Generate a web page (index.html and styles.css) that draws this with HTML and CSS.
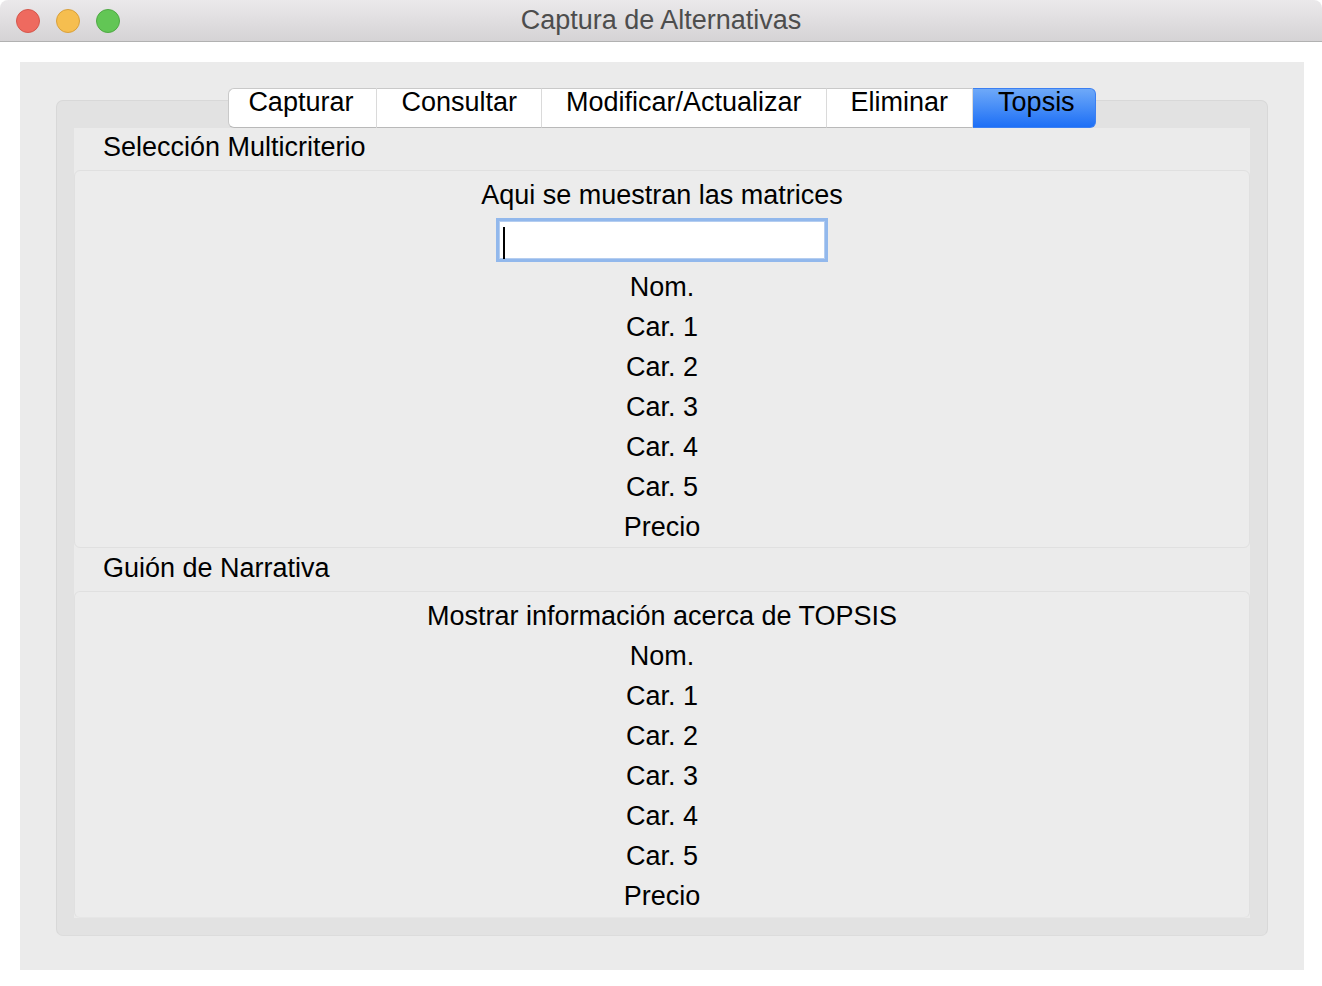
FILE: index.html
```html
<!DOCTYPE html>
<html lang="es">
<head>
<meta charset="utf-8">
<title>Captura de Alternativas</title>
<link rel="stylesheet" href="styles.css">
</head>
<body>
<div class="window">
  <div class="titlebar">
    <div class="lights">
      <span class="light red"></span>
      <span class="light yellow"></span>
      <span class="light green"></span>
    </div>
    <div class="title">Captura de Alternativas</div>
  </div>
  <div class="body">
    <div class="panel">
      <div class="tabpane">
        <div class="tabs">
          <div class="tab first">Capturar</div>
          <div class="tab">Consultar</div>
          <div class="tab">Modificar/Actualizar</div>
          <div class="tab">Eliminar</div>
          <div class="tab active">Topsis</div>
        </div>
        <div class="content">
          <div class="sec-head">Selección Multicriterio</div>
          <div class="sec-box">
            <div class="row">Aqui se muestran las matrices</div>
            <div class="input"><span class="caret"></span></div>
            <div class="row gap">Nom.</div>
            <div class="row">Car. 1</div>
            <div class="row">Car. 2</div>
            <div class="row">Car. 3</div>
            <div class="row">Car. 4</div>
            <div class="row">Car. 5</div>
            <div class="row">Precio</div>
          </div>
          <div class="sec-head second">Guión de Narrativa</div>
          <div class="sec-box last">
            <div class="row">Mostrar información acerca de TOPSIS</div>
            <div class="row">Nom.</div>
            <div class="row">Car. 1</div>
            <div class="row">Car. 2</div>
            <div class="row">Car. 3</div>
            <div class="row">Car. 4</div>
            <div class="row">Car. 5</div>
            <div class="row">Precio</div>
          </div>
        </div>
      </div>
    </div>
  </div>
</div>
</body>
</html>
```
FILE: styles.css
```css
html, body {
  margin: 0;
  padding: 0;
  background: #ffffff;
}
body {
  font-family: "Liberation Sans", Arial, sans-serif;
  font-size: 27px;
  color: #000;
}
.window {
  width: 1322px;
  height: 986px;
  display: flex;
  flex-direction: column;
}
.titlebar {
  height: 41px;
  border-bottom: 1px solid #b1b1b1;
  background: linear-gradient(#ebe9eb, #d5d3d5);
  display: flex;
  align-items: center;
  position: relative;
  border-radius: 8px 8px 0 0;
}
.lights {
  display: flex;
  gap: 16px;
  padding-left: 16px;
}
.light {
  width: 24px;
  height: 24px;
  border-radius: 50%;
  box-sizing: border-box;
}
.red { background: #ee6a5f; border: 1px solid #d5574c; }
.yellow { background: #f6be4f; border: 1px solid #d9a03b; }
.green { background: #62c655; border: 1px solid #4fa944; }
.title {
  position: absolute;
  left: 0;
  right: 0;
  top: 0;
  height: 41px;
  line-height: 41px;
  text-align: center;
  color: #4d4d4d;
  font-size: 27px;
}
.body {
  flex: 1;
  padding: 20px 18px 16px 20px;
  display: flex;
}
.panel {
  flex: 1;
  background: #ebebeb;
  padding: 38px 36px 34px 36px;
  display: flex;
}
.tabpane {
  flex: 1;
  background: #e2e2e2;
  border: 1px solid #d8d8d8;
  border-bottom-color: #dcdcdc;
  border-radius: 7px;
  padding: 0 17px 17px 17px;
  display: flex;
  flex-direction: column;
}
.tabs {
  margin-top: -13px;
  height: 40px;
  display: flex;
  justify-content: center;
  position: relative;
  z-index: 1;
}
.tab {
  background: #ffffff;
  border-top: 1px solid #c9c9c9;
  border-bottom: 1px solid #b9b9b9;
  border-right: 1px solid #dadada;
  padding: 0 24px;
  line-height: 27px;
  box-sizing: border-box;
  height: 40px;
}
.tab.first {
  border-left: 1px solid #c9c9c9;
  border-radius: 6px 0 0 6px;
  padding-left: 19px;
  padding-right: 23px;
}
.tab.active {
  background: linear-gradient(#6ea9f8, #1d6ff6);
  border-color: #3b7ff2;
  border-radius: 0 6px 6px 0;
  padding-left: 25px;
  padding-right: 20px;
}
.content {
  flex: 1;
  background: #ebebeb;
  display: flex;
  flex-direction: column;
}
.sec-head {
  height: 42px;
  line-height: 38px;
  padding-left: 29px;
}
.sec-head.second {
  height: 43px;
  line-height: 40px;
}
.sec-box {
  border: 1px solid #e0e0e0;
  border-radius: 6px;
  background: #ececec;
  padding-top: 4px;
  display: flex;
  flex-direction: column;
  align-items: center;
}
.sec-box.last {
  flex: 1;
  border-bottom-color: #e6e6e6;
}
.row {
  height: 40px;
  line-height: 40px;
  text-align: center;
}
.row.gap {
  margin-top: 5px;
}
.input {
  margin-top: 3px;
  width: 332px;
  height: 44px;
  box-sizing: border-box;
  border: 3px solid #92b8ec;
  background: #fff;
  position: relative;
}
.input::before {
  content: "";
  position: absolute;
  inset: 0;
  border: 1px solid #b4cdf0;
}
.caret {
  position: absolute;
  left: 4px;
  top: 6px;
  width: 2px;
  height: 32px;
  background: #000;
}
```
